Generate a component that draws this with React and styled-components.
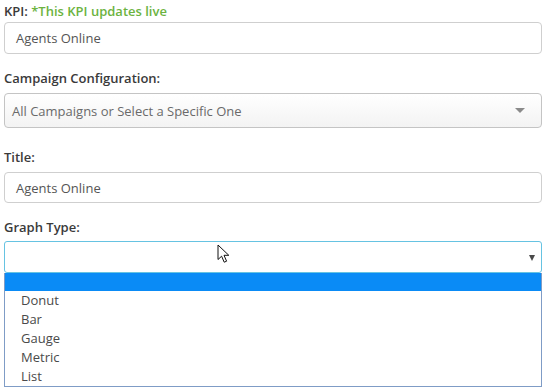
import React from "react";
import styled, { createGlobalStyle } from "styled-components";

const GlobalStyle = createGlobalStyle`
  html, body {
    margin: 0;
    padding: 0;
    background: #ffffff;
  }
  body {
    font-family: "Open Sans", "Noto Sans", sans-serif;
    -webkit-font-smoothing: antialiased;
  }
`;

const Form = styled.div`
  width: 538px;
  padding: 2px 6px 0 4px;
`;

const Group = styled.div`
  margin-bottom: ${(p) => p.$gap ?? 15}px;
  position: relative;
`;

const Label = styled.div`
  font-size: 13px;
  font-weight: 600;
  line-height: 18px;
  color: #3a3a3a;
  margin-bottom: ${(p) => p.$mb ?? 6}px;
  white-space: nowrap;
`;

const Hint = styled.span`
  color: #6cb33f;
`;

const TextBox = styled.div`
  box-sizing: border-box;
  height: ${(p) => p.$h ?? 32}px;
  border: 1px solid #cfcfcf;
  border-radius: 4px;
  padding: 0 11px;
  display: flex;
  align-items: center;
  font-size: 13px;
  color: #555555;
  background: #fff;
`;

const Dropdown = styled.div`
  box-sizing: border-box;
  height: 35px;
  border: 1px solid #c4c4c4;
  border-radius: 4px;
  padding: 0 16px 0 7px;
  display: flex;
  align-items: center;
  justify-content: space-between;
  font-size: 13px;
  color: #6a6a6a;
  background: linear-gradient(#ffffff 0%, #f3f3f3 100%);
`;

const Caret = styled.span`
  width: 0;
  height: 0;
  border-left: 5px solid transparent;
  border-right: 5px solid transparent;
  border-top: 5px solid #8a8a8a;
`;

const NativeSelect = styled.div`
  box-sizing: border-box;
  height: 32px;
  border: 1px solid #66c3e2;
  border-radius: 3px;
  padding: 0 6px 0 12px;
  display: flex;
  align-items: center;
  justify-content: flex-end;
  background: #fff;
`;

const SmallCaret = styled.span`
  width: 0;
  height: 0;
  border-left: 3.5px solid transparent;
  border-right: 3.5px solid transparent;
  border-top: 6px solid #4a4a4a;
  margin-top: 1px;
`;

const OptionList = styled.div`
  box-sizing: border-box;
  border: 1px solid #7f9cc6;
  border-top: none;
  background: #fff;
`;

const Option = styled.div`
  height: ${(p) => (p.$selected ? 18 : 19)}px;
  line-height: 19px;
  padding-left: 16px;
  font-size: 13px;
  color: #4a4a4a;
  background: ${(p) => (p.$selected ? "#0a8bf6" : "transparent")};
`;

const Pointer = styled.svg`
  position: absolute;
  left: 213px;
  top: 26px;
  pointer-events: none;
`;

const options = ["Donut", "Bar", "Gauge", "Metric", "List"];

export default function App() {
  return (
    <>
      <GlobalStyle />
      <Form>
        <Group $gap={15}>
          <Label $mb={2}>
            KPI: <Hint>*This KPI updates live</Hint>
          </Label>
          <TextBox>Agents Online</TextBox>
        </Group>
        <Group $gap={20}>
          <Label>Campaign Configuration:</Label>
          <Dropdown>
            <span>All Campaigns or Select a Specific One</span>
            <Caret />
          </Dropdown>
        </Group>
        <Group $gap={15}>
          <Label>Title:</Label>
          <TextBox $h={31}>Agents Online</TextBox>
        </Group>
        <Group $gap={0}>
          <Label $mb={5}>Graph Type:</Label>
          <NativeSelect>
            <SmallCaret />
          </NativeSelect>
          <OptionList>
            <Option $selected />
            {options.map((o) => (
              <Option key={o}>{o}</Option>
            ))}
          </OptionList>
          <Pointer width="14" height="20" viewBox="0 0 14 20">
            <path
              d="M1 1 L1 15.5 L4.6 12.2 L7.2 18.2 L9.6 17.2 L7 11.3 L11.8 11.3 Z"
              fill="#ffffff"
              stroke="#111111"
              strokeWidth="1"
              strokeLinejoin="miter"
            />
          </Pointer>
        </Group>
      </Form>
    </>
  );
}
